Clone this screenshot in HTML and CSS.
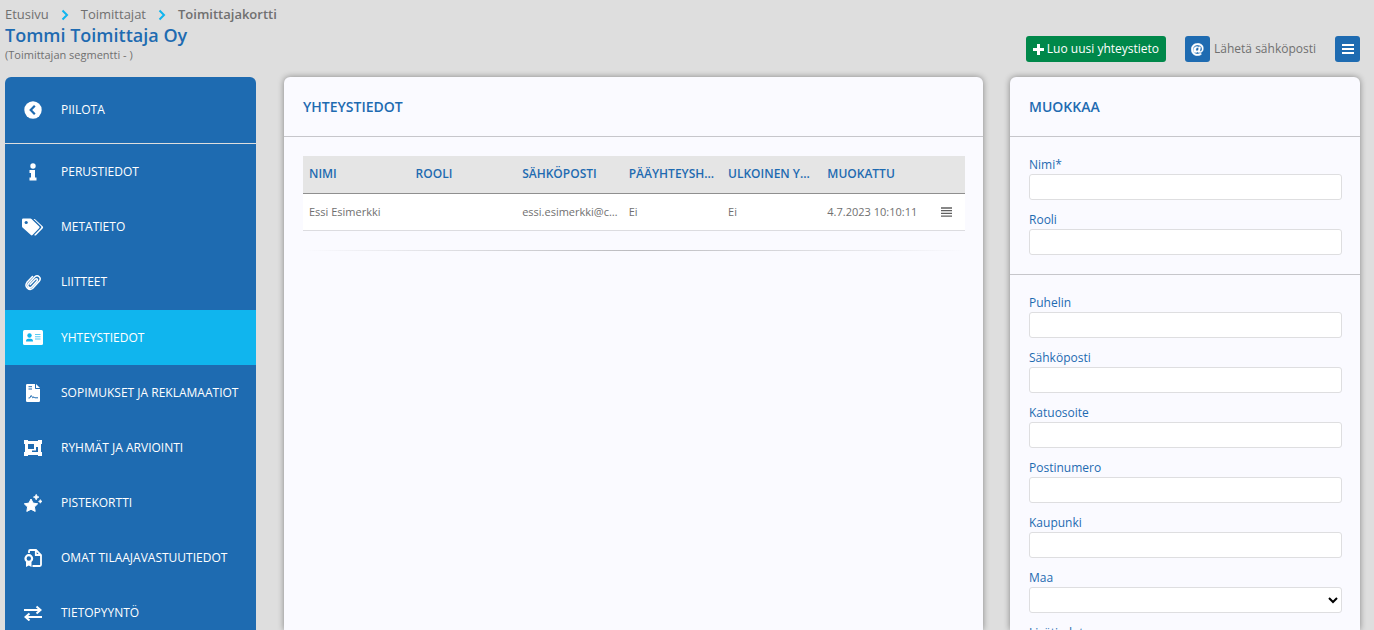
FILE: index.html
```html
<!DOCTYPE html>
<html lang="fi">
<head>
<meta charset="utf-8">
<title>Toimittajakortti</title>
<link rel="stylesheet" href="styles.css">
</head>
<body>
<div class="app">
  <header class="top">
    <div class="heading">
      <nav class="crumbs" aria-label="Murupolku">
        <a href="#">Etusivu</a>
        <svg class="chev" viewBox="0 0 8 12"><path d="M1.500 1.500 6 6 1.500 10.500"/></svg>
        <a href="#">Toimittajat</a>
        <svg class="chev" viewBox="0 0 8 12"><path d="M1.500 1.500 6 6 1.500 10.500"/></svg>
        <a href="#" class="current">Toimittajakortti</a>
      </nav>
      <h1>Tommi Toimittaja Oy</h1>
      <p class="segment">(Toimittajan segmentti - )</p>
    </div>
    <div class="actions">
      <button class="btn create"><svg viewBox="0 0 11 11" width="11" height="11"><path d="M4 0h3v4h4v3H7v4H4V7H0V4h4z" fill="currentColor"/></svg>Luo uusi yhteystieto</button>
      <button class="mail"><span class="btn square"><svg viewBox="0 0 512 512" width="13" height="13"><path fill="currentColor" stroke="currentColor" stroke-width="16" d="M256 8C118.900 8 8 118.900 8 256c0 137.100 110.900 248 248 248 52 0 104-17 146-47 10-8 12-22 4-32l-14-17c-8-10-22-12-32-5-30 21-67 33-104 33-99 0-180-81-180-180S157 76 256 76c98 0 180 56 180 157 0 60-33 92-69 94-17 0-17-12-14-29l24-124c3-15-8-29-24-29h-45c-12 0-21 9-23 20-15-18-39-23-57-23-70 0-131 58-131 139 0 59 34 98 87 98 26 0 57-15 74-39 4 35 34 39 72 39 109 0 154-68 154-147C504 95 392 8 256 8zm-22 303c-26 0-42-18-42-47 0-53 36-85 68-85 28 0 42 19 42 47 0 46-35 85-68 85z"/></svg></span>Lähetä sähköposti</button>
      <button class="btn square" aria-label="Valikko"><svg viewBox="0 0 12 12" width="12" height="12"><path d="M0 2h12M0 6h12M0 10h12" stroke="currentColor" stroke-width="2"/></svg></button>
    </div>
  </header>

  <div class="columns">
    <nav class="side" aria-label="Toimittaja">
      <a href="#" class="item hide"><svg viewBox="0 0 18 18" width="18" height="18"><circle cx="9" cy="9" r="8.700" fill="#fff"/><path d="M10.800 4.800 6.700 9l4.100 4.200" fill="none" stroke="#1e6bb1" stroke-width="2.200"/></svg>PIILOTA</a>
      <a href="#" class="item"><svg viewBox="0 0 8 18" width="8" height="18"><g fill="#fff"><circle cx="4" cy="3" r="2.700"/><path d="M.5 7h5.500v7.500h1.500V17.500H.5v-3H2V10H.5z"/></g></svg>PERUSTIEDOT</a>
      <a href="#" class="item"><svg viewBox="0 0 22 18" width="22" height="18"><path fill="#fff" d="M0 1.700Q0 .5 1.200.5H8.500q.6 0 1 .4l7.800 7.600q.7.8 0 1.600l-6.800 7q-.8.700-1.600 0L.5 9.400Q0 9 0 8.300z"/><circle cx="4.200" cy="4.500" r="1.600" fill="#1e6bb1"/><path d="M11.500.9h1.300l8 7.700q.7.800 0 1.600l-6.800 7q-.8.700-1.600 0l-.3-.3 6.900-7q.8-.8 0-1.600z" fill="#fff"/></svg>METATIETO</a>
      <a href="#" class="item"><svg viewBox="0 0 18 18" width="18" height="18"><path d="M6.200 11.500 11.300 6.200q1.300-1 1.900 0t-.3 2L7.600 14c-2 1.700-5-.7-3.200-3.200L10.800 3.800c3-2.700 7.200 1 4.400 4.400L8.600 15.500c-3.200 2.600-8.800-1.500-5.600-6.200L8.500 3.500" fill="none" stroke="#fff" stroke-width="1.500" stroke-linecap="round"/></svg>LIITTEET</a>
      <a href="#" class="item active"><svg viewBox="0 0 20 15" width="20" height="15"><rect width="20" height="15" rx="1.500" fill="#fff"/><g fill="#10b5ee"><circle cx="6.500" cy="5.500" r="2.200"/><path d="M3 11.500q0-2.700 2.200-2.700h2.600q2.200 0 2.200 2.700z"/><path d="M12 4h5.500v1H12zm0 2.300h5.500v1H12zm0 2.300h5.500v1H12z" opacity=".7"/></g></svg>YHTEYSTIEDOT</a>
      <a href="#" class="item"><svg viewBox="0 0 14 18" width="14" height="18"><path d="M1.200 0H9v4.200q0 .8.800.8H14v11.800q0 1.200-1.200 1.200H1.200Q0 18 0 16.800V1.200Q0 0 1.200 0zM10 0l4 4h-4z" fill="#fff"/><path d="M2.500 2.700H6M2.500 5H6M2.500 14h1.200l1.500-2.500 1.600 2.300 1.200-1 .8 1H12" fill="none" stroke="#1e6bb1"/></svg>SOPIMUKSET JA REKLAMAATIOT</a>
      <a href="#" class="item"><svg viewBox="0 0 18 16" width="18" height="16"><path d="M0 0h4v1h10V0h4v4h-1v8h1v4h-4v-1H4v1H0v-4h1V4H0z" fill="#fff"/><path d="M4 4h6v5H4zM12 7h2v5H8v-1.500h4z" fill="#1e6bb1"/></svg>RYHMÄT JA ARVIOINTI</a>
      <a href="#" class="item"><svg viewBox="0 0 18 18" width="18" height="18"><g fill="#fff"><path d="m7 5 2.100 4.100 4.600.7-3.300 3.200.8 4.400L7 15.300l-4.200 2.100.8-4.400L.3 9.800l4.600-.7z" stroke="#fff" stroke-width="1" stroke-linejoin="round"/><path d="m12.200.3.9 1.900 1.900.9-1.900.9-.9 1.900-.9-1.900-1.900-.9 1.900-.9zM16.300 5.600l.6 1.200 1.200.6-1.200.6-.6 1.200-.6-1.200-1.200-.6 1.200-.6z" stroke="#fff" stroke-width=".7"/></g></svg>PISTEKORTTI</a>
      <a href="#" class="item"><svg viewBox="0 0 18 18" width="18" height="18"><path d="M5 4V2.200Q5 1 6.200 1H12l5 5v9.800q0 1.200-1.200 1.200H8.500M11.800 1v5H17" fill="none" stroke="#fff" stroke-width="1.800"/><circle cx="4.800" cy="9.500" r="3.300" fill="none" stroke="#fff" stroke-width="2.200"/><path d="M2 12.500h5.500V18l-2.700-1.400L2 18z" fill="#fff"/></svg>OMAT TILAAJAVASTUUTIEDOT</a>
      <a href="#" class="item"><svg viewBox="0 0 18 16" width="18" height="16"><path d="M0 5h16M18 12H2" stroke="#fff" stroke-width="2"/><path d="M12.500 1.500 16.500 5l-4 3.500M5.500 8.500 1.500 12l4 3.500" fill="none" stroke="#fff" stroke-width="2"/></svg>TIETOPYYNTÖ</a>
    </nav>

    <main class="card contacts">
      <h2>YHTEYSTIEDOT</h2>
      <div class="table-wrap">
        <table>
          <colgroup><col class="c-wide"><col class="c-wide"><col class="c-wide"><col class="c-mid"><col class="c-mid"><col class="c-wide"><col></colgroup>
          <thead><tr><th>NIMI</th><th>ROOLI</th><th>SÄHKÖPOSTI</th><th>PÄÄYHTEYSHENKILÖ</th><th>ULKOINEN YHTEYSTIETO</th><th>MUOKATTU</th><th></th></tr></thead>
          <tbody><tr><td>Essi Esimerkki</td><td></td><td>essi.esimerkki@cloudia.fi</td><td>Ei</td><td>Ei</td><td>4.7.2023 10:10:11</td><td><button class="row-menu" aria-label="Rivin valikko"><svg viewBox="0 0 11 10" width="11" height="10"><path d="M0 1h11M0 3.700h11M0 6.400h11M0 9.100h11" stroke="#606060" stroke-width="1.300"/></svg></button></td></tr></tbody>
        </table>
        <hr>
      </div>
    </main>

    <form class="card edit">
      <h2>MUOKKAA</h2>
      <div class="group">
        <div class="field"><label for="nimi">Nimi*</label><input id="nimi" type="text"></div>
        <div class="field"><label for="rooli">Rooli</label><input id="rooli" type="text"></div>
      </div>
      <div class="group">
        <div class="field"><label for="puhelin">Puhelin</label><input id="puhelin" type="text"></div>
        <div class="field"><label for="email">Sähköposti</label><input id="email" type="text"></div>
        <div class="field"><label for="katu">Katuosoite</label><input id="katu" type="text"></div>
        <div class="field"><label for="posti">Postinumero</label><input id="posti" type="text"></div>
        <div class="field"><label for="kaupunki">Kaupunki</label><input id="kaupunki" type="text"></div>
        <div class="field"><label for="maa">Maa</label><select id="maa"><option></option></select></div>
        <div class="field"><label for="lisa">Lisätiedot</label><input id="lisa" type="text"></div>
      </div>
    </form>
  </div>
</div>
</body>
</html>
```
FILE: styles.css
```css
* { box-sizing: border-box; }
body {
  margin: 0;
  background: #dedede;
  color: #707070;
  font: 12px/20px "Open Sans", "Noto Sans", sans-serif;
}
a { color: inherit; text-decoration: none; }
button { font: inherit; color: inherit; border: 0; background: none; padding: 0; cursor: pointer; }
h1, h2, p { margin: 0; }

.app { height: 100vh; overflow: hidden; display: flex; flex-direction: column; }

.top { display: flex; justify-content: space-between; padding: 5px 14px 0 5px; height: 77px; flex: none; }
.crumbs { display: flex; align-items: center; gap: 12px; font-size: 13px; line-height: 19px; }
.chev { width: 8px; height: 12px; fill: none; stroke: #10b5ee; stroke-width: 2; }
.current { font-weight: 600; }
h1 { font-size: 18px; line-height: 22px; font-weight: 600; color: #1e6bb1; }
.segment { font-size: 11px; line-height: 18px; font-weight: 500; }

.actions { display: flex; align-items: flex-start; padding-top: 31px; gap: 19px; }
.btn { display: flex; align-items: center; justify-content: center; height: 26px; border-radius: 3px; color: #fff; }
.create { gap: 3px; padding: 0 7px; background: #00884a; font-weight: 500; }
.mail { display: flex; align-items: center; gap: 4px; }
.square { width: 25px; background: #1e6bb1; }

.columns { flex: 1; min-height: 0; display: flex; align-items: stretch; padding: 0 14px 0 5px; }

.side { width: 251px; flex: none; background: #1e6bb1; border-radius: 6px 6px 0 0; color: #fff; }
.item { display: grid; grid-template-columns: 56px 1fr; align-items: center; height: 55px; }
.item svg { justify-self: center; }
.hide { height: 67px; border-bottom: 1px solid #dedede; }
.active { margin-top: 1px; background: #10b5ee; }

.card { background: #fafaff; border-radius: 6px 6px 0 0; box-shadow: 0 0 6px rgba(0, 0, 0, .4); }
.card h2 { padding: 20px 19px 19px; border-bottom: 1px solid #c6c6cb; font-size: 14px; line-height: 20px; font-weight: 600; color: #1e6bb1; }

.contacts { flex: 1; min-width: 0; margin: 0 27px 0 28px; }
.table-wrap { padding: 19px 18px 0 19px; }
table { width: 100%; table-layout: fixed; border-collapse: collapse; }
.c-wide { width: 16.1%; }
.c-mid { width: 15%; }
th, td { padding: 0 4px 0 6px; text-align: left; overflow: hidden; text-overflow: ellipsis; white-space: nowrap; }
th { height: 37px; background: #e5e5e5; border-bottom: 1px solid #8f8f8f; color: #1e6bb1; font-weight: 600; }
td { height: 37px; background: #fff; border-bottom: 1px solid #dcdce0; font-size: 11px; }
.row-menu { display: block; margin-left: 7px; }
.row-menu svg { display: block; }
hr { height: 1px; border: 0; margin: 19px 0 0; background: linear-gradient(to right, transparent, #bbbbbf 50%, transparent); }

.edit { width: 350px; flex: none; overflow: hidden; }
.group { display: flex; flex-direction: column; gap: 9px; padding: 17px 18px 19px 19px; border-bottom: 1px solid #c6c6cb; }
.field label { display: block; padding-top: 2px; line-height: 18px; color: #1e6bb1; }
.field input, .field select { display: block; width: 100%; height: 26px; border: 1px solid #dedee0; border-radius: 3px; background: #fff; font: inherit; }
```
